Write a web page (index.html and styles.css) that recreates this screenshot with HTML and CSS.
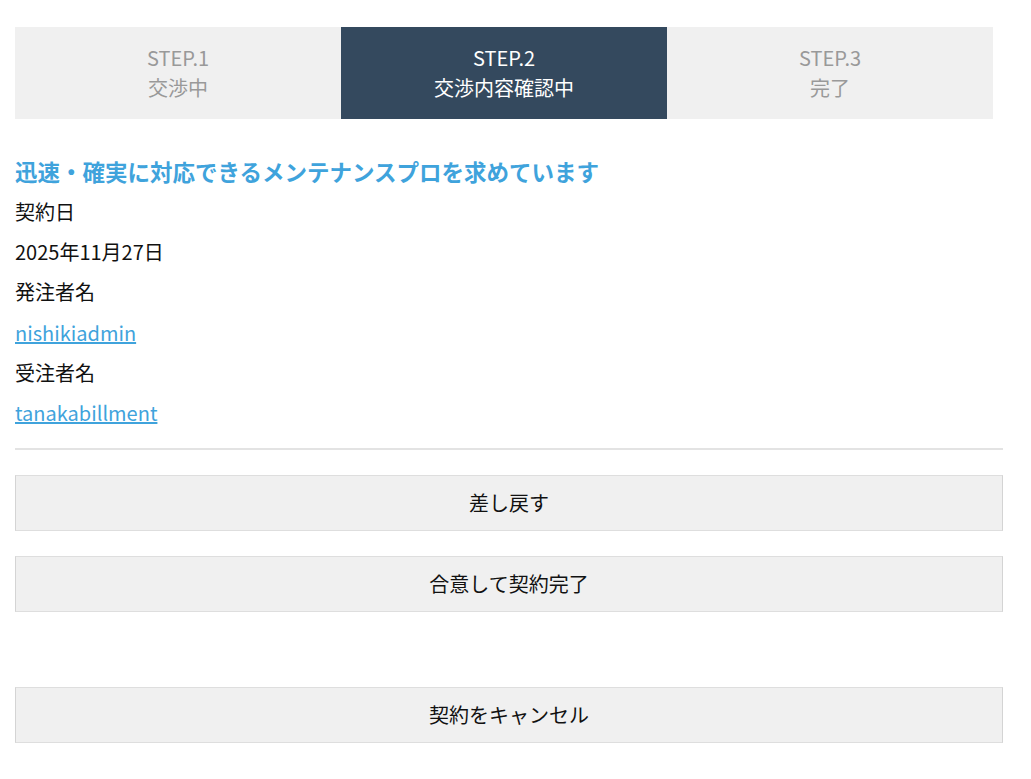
FILE: index.html
```html
<!DOCTYPE html>
<html lang="ja">
<head>
<meta charset="utf-8">
<title>契約内容確認</title>
<link rel="stylesheet" href="styles.css">
</head>
<body>
<div class="page">
  <ol class="steps">
    <li class="step"><span>STEP.1</span><span>交渉中</span></li>
    <li class="step step-active"><span>STEP.2</span><span>交渉内容確認中</span></li>
    <li class="step"><span>STEP.3</span><span>完了</span></li>
  </ol>
  <h2 class="title">迅速・確実に対応できるメンテナンスプロを求めています</h2>
  <dl class="info">
    <dt>契約日</dt>
    <dd>2025年11月27日</dd>
    <dt>発注者名</dt>
    <dd><a href="#">nishikiadmin</a></dd>
    <dt>受注者名</dt>
    <dd><a href="#">tanakabillment</a></dd>
  </dl>
  <div class="divider"></div>
  <div class="actions">
    <button class="btn" type="button">差し戻す</button>
    <button class="btn" type="button">合意して契約完了</button>
    <button class="btn btn-cancel" type="button">契約をキャンセル</button>
  </div>
</div>
</body>
</html>
```

FILE: styles.css
```css
html, body {
  margin: 0;
  padding: 0;
  background: #ffffff;
}

body {
  font-family: "Noto Sans CJK JP", "Noto Sans", sans-serif;
  color: #111111;
}

.page {
  width: 988px;
  margin-left: 15px;
  padding-top: 27px;
}

.steps {
  list-style: none;
  margin: 0;
  padding: 0;
  display: flex;
}

.step {
  width: 33%;
  height: 92px;
  box-sizing: border-box;
  background: #f0f0f0;
  color: #999999;
  font-size: 20px;
  line-height: 30px;
  display: flex;
  flex-direction: column;
  align-items: center;
  justify-content: center;
}

.step-active {
  background: #34495e;
  color: #ffffff;
}

.title {
  margin: 35px 0 9px;
  font-size: 22.5px;
  line-height: 34px;
  font-weight: 700;
  color: #3fa3dc;
}

.info {
  margin: 0;
  display: flex;
  flex-direction: column;
  gap: 10.2px;
}

.info dt,
.info dd {
  margin: 0;
  font-size: 20px;
  line-height: 30px;
}

.info a {
  color: #3fa3dc;
  text-decoration: underline;
}

.divider {
  margin-top: 20px;
  height: 2px;
  background: #e3e3e3;
}

.actions {
  display: flex;
  flex-direction: column;
  gap: 25px;
  padding-top: 25px;
}

.btn {
  display: block;
  width: 100%;
  height: 56px;
  margin: 0;
  padding: 0;
  background: #f0f0f0;
  border: 1px solid #d4d4d4;
  border-top-color: #dedede;
  border-bottom-color: #dedede;
  border-radius: 0;
  font-family: "Noto Sans CJK JP", "Noto Sans", sans-serif;
  font-size: 20px;
  color: #111111;
  cursor: pointer;
}

.btn-cancel {
  margin-top: 50px;
}
```
